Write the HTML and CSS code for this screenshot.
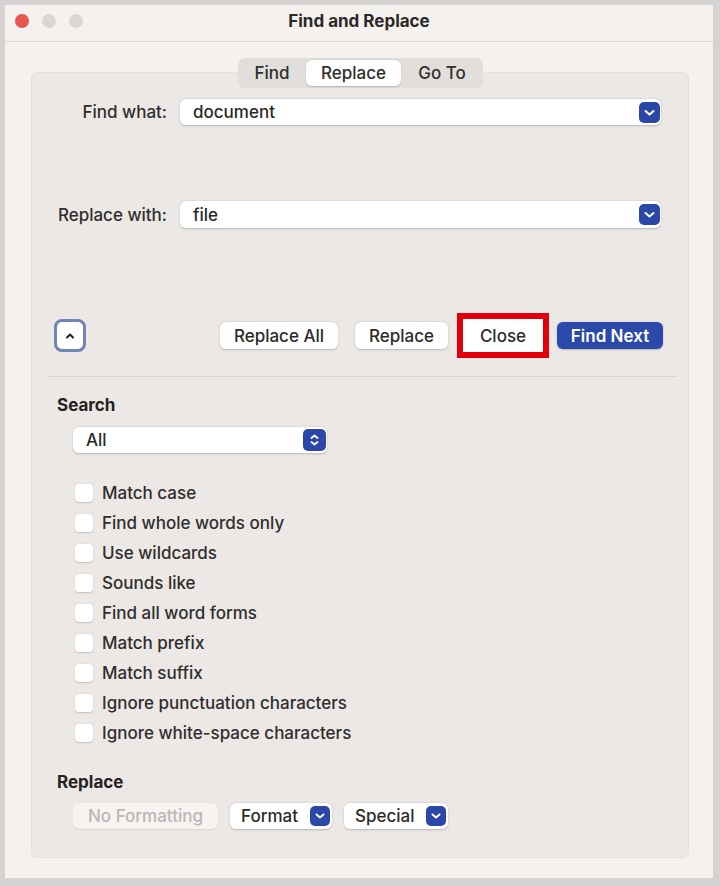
FILE: index.html
```html
<!DOCTYPE html>
<html>
<head>
<meta charset="utf-8">
<link rel="stylesheet" href="styles.css">
</head>
<body>
<div class="window">
  <div class="titlebar">
    <div class="lights">
      <span class="light red"></span>
      <span class="light gray"></span>
      <span class="light gray"></span>
    </div>
    <div class="title">Find and Replace</div>
  </div>
  <div class="content">
    <div class="tabs">
      <div class="tab">Find</div>
      <div class="tab selected">Replace</div>
      <div class="tab">Go To</div>
    </div>
    <div class="panel">
      <div class="field-row">
        <div class="label">Find what:</div>
        <div class="field">
          <span class="field-text">document</span>
          <span class="drop-btn"><svg width="21" height="21" viewBox="0 0 21 21"><path d="M6.5 9 L10.5 12.5 L14.5 9" fill="none" stroke="#fff" stroke-width="2" stroke-linecap="round" stroke-linejoin="round"/></svg></span>
        </div>
      </div>
      <div class="field-row second">
        <div class="label">Replace with:</div>
        <div class="field">
          <span class="field-text">file</span>
          <span class="drop-btn"><svg width="21" height="21" viewBox="0 0 21 21"><path d="M6.5 9 L10.5 12.5 L14.5 9" fill="none" stroke="#fff" stroke-width="2" stroke-linecap="round" stroke-linejoin="round"/></svg></span>
        </div>
      </div>
      <div class="button-row">
        <div class="collapse"><svg width="12" height="8" viewBox="0 0 12 8"><path d="M3 5.5 L6 2.5 L9 5.5" fill="none" stroke="#222" stroke-width="2" stroke-linecap="round" stroke-linejoin="round"/></svg></div>
        <div class="spacer"></div>
        <div class="btn w-replace-all">Replace All</div>
        <div class="btn w-replace">Replace</div>
        <div class="highlight"><div class="btn w-close">Close</div></div>
        <div class="btn primary w-find-next">Find Next</div>
      </div>
      <div class="separator"></div>
      <div class="section-title">Search</div>
      <div class="select">
        <span class="field-text">All</span>
        <span class="updown"><svg width="23" height="22" viewBox="0 0 23 22"><path d="M8.5 9 L11.5 6.5 L14.5 9 M8.5 13 L11.5 15.5 L14.5 13" fill="none" stroke="#fff" stroke-width="1.8" stroke-linecap="round" stroke-linejoin="round"/></svg></span>
      </div>
      <div class="checks">
        <div class="check"><span class="box"></span>Match case</div>
        <div class="check"><span class="box"></span>Find whole words only</div>
        <div class="check"><span class="box"></span>Use wildcards</div>
        <div class="check"><span class="box"></span>Sounds like</div>
        <div class="check"><span class="box"></span>Find all word forms</div>
        <div class="check"><span class="box"></span>Match prefix</div>
        <div class="check"><span class="box"></span>Match suffix</div>
        <div class="check"><span class="box"></span>Ignore punctuation characters</div>
        <div class="check"><span class="box"></span>Ignore white-space characters</div>
      </div>
      <div class="section-title replace-title">Replace</div>
      <div class="bottom-row">
        <div class="btn disabled w-nofmt">No Formatting</div>
        <div class="btn menu w-format">Format <span class="mini-drop"><svg width="20" height="20" viewBox="0 0 20 20"><path d="M6.5 8.5 L10 11.5 L13.5 8.5" fill="none" stroke="#fff" stroke-width="2" stroke-linecap="round" stroke-linejoin="round"/></svg></span></div>
        <div class="btn menu w-special">Special <span class="mini-drop"><svg width="20" height="20" viewBox="0 0 20 20"><path d="M6.5 8.5 L10 11.5 L13.5 8.5" fill="none" stroke="#fff" stroke-width="2" stroke-linecap="round" stroke-linejoin="round"/></svg></span></div>
      </div>
    </div>
  </div>
</div>
</body>
</html>
```

FILE: styles.css
```css
* { box-sizing: border-box; }
html, body { margin: 0; }
body {
  background: #d4d3d2;
  padding: 5px 7px 8px 5px;
  font-family: "Inter", "Liberation Sans", sans-serif;
  color: #2c2b2a;
  font-size: 17px;
  font-weight: 500;
}
.window {
  width: 708px;
  height: 873px;
  background: #f5f1ee;
  display: flex;
  flex-direction: column;
}
.titlebar {
  height: 37px;
  flex: none;
  border-bottom: 1px solid #dcd8d5;
  display: grid;
  grid-template-columns: 1fr auto 1fr;
  align-items: center;
}
.lights {
  display: flex;
  gap: 13px;
  padding-left: 10px;
  padding-bottom: 4px;
}
.light {
  width: 14px;
  height: 14px;
  border-radius: 50%;
  background: #d9d6d4;
}
.light.red { background: #e8564f; }
.title {
  font-weight: 700;
  font-size: 17px;
  color: #2a2928;
  padding-bottom: 4px;
}
.content {
  flex: 1;
  display: flex;
  flex-direction: column;
  padding: 16px 24px 21px 26px;
}
.tabs {
  align-self: center;
  display: flex;
  height: 30px;
  flex: none;
  background: #e2dedb;
  border-radius: 7px;
  position: relative;
  z-index: 1;
  margin-left: 1px;
}
.tab {
  display: flex;
  align-items: center;
  justify-content: center;
  font-size: 17px;
  color: #2f2e2d;
  padding: 0 10px;
}
.tab:first-child { width: 68px; }
.tab.selected {
  width: 95px;
  background: #fff;
  border-radius: 6px;
  margin: 2px 0;
  box-shadow: 0 0.5px 1.5px rgba(0,0,0,0.2);
}
.tab:last-child { width: 82px; }
.panel {
  flex: 1;
  margin-top: -16px;
  background: #ece8e5;
  border-radius: 6px;
  box-shadow: inset 0 0 0 1px rgba(0,0,0,0.03);
  padding: 27px 28px 29px 26px;
  display: flex;
  flex-direction: column;
}
.field-row {
  display: grid;
  grid-template-columns: 110px 481px;
  column-gap: 13px;
  align-items: center;
  height: 26px;
}
.field-row.second { margin-top: 76px; height: 27px; }
.label {
  text-align: right;
  color: #2f2e2d;
}
.field {
  height: 100%;
  background: #fff;
  border-radius: 6px;
  box-shadow: 0 0.5px 2px rgba(0,0,0,0.22);
  display: flex;
  align-items: center;
  justify-content: space-between;
  padding: 0 1px 0 13px;
}
.field-text { color: #2a2928; }
.drop-btn {
  width: 21px;
  height: 21px;
  border-radius: 5px;
  background: #2b47a8;
  display: flex;
  box-shadow: 0 0 0 1px rgba(255,255,255,0.8);
}
.button-row {
  margin-top: 91px;
  margin-right: -2px;
  display: flex;
  align-items: center;
  height: 33px;
}
.collapse {
  margin-left: -3px;
  width: 32px;
  height: 33px;
  border: 3px solid #7283b6;
  border-radius: 8px;
  background: #fff;
  display: flex;
  align-items: center;
  justify-content: center;
}
.spacer { flex: 1; }
.btn {
  height: 27px;
  background: #fff;
  border-radius: 6px;
  box-shadow: 0 0.5px 2px rgba(0,0,0,0.22);
  display: flex;
  align-items: center;
  justify-content: center;
  font-size: 17px;
  color: #2c2b2a;
  white-space: nowrap;
}
.w-replace-all { width: 118px; margin-right: 17px; }
.w-replace { width: 93px; margin-right: 9px; }
.highlight {
  width: 92px;
  height: 45px;
  border: 6px solid #e3000b;
  background: #fff;
  margin-right: 8px;
  display: flex;
  align-items: center;
  justify-content: center;
}
.w-close { width: 80px; height: 33px; box-shadow: none; }
.primary {
  width: 106px;
  background: #2a49a9;
  color: #fff;
  font-weight: 600;
}
.separator {
  margin: 24px -16px 0 -9px;
  height: 1px;
  background: #d9d5d2;
}
.section-title {
  margin-top: 18px;
  height: 20px;
  line-height: 20px;
  font-weight: 700;
  color: #242322;
}
.select {
  margin-top: 12px;
  margin-left: 16px;
  width: 254px;
  height: 26px;
  background: #fff;
  border-radius: 6px;
  box-shadow: 0 0.5px 2px rgba(0,0,0,0.22);
  display: flex;
  align-items: center;
  justify-content: space-between;
  padding: 0 1px 0 13px;
}
.updown {
  width: 23px;
  height: 22px;
  border-radius: 5px;
  background: #2b47a8;
  display: flex;
}
.checks {
  margin-top: 25px;
  display: flex;
  flex-direction: column;
}
.check {
  height: 30px;
  display: flex;
  align-items: center;
  padding-left: 18px;
  color: #2f2e2d;
}
.box {
  width: 18px;
  height: 18px;
  border-radius: 4px;
  background: #fff;
  box-shadow: 0 0.5px 1.5px rgba(0,0,0,0.18);
  margin-right: 9px;
}
.replace-title { margin-top: 24px; }
.bottom-row {
  margin-top: 11px;
  display: flex;
  gap: 12px;
  padding-left: 16px;
  height: 26px;
}
.bottom-row .btn { height: 26px; }
.disabled {
  width: 145px;
  color: #bab7b5;
  background: #f6f3f1;
  box-shadow: 0 0.5px 1px rgba(0,0,0,0.08);
}
.menu {
  justify-content: space-between;
  padding: 0 2px 0 11px;
}
.w-format { width: 102px; }
.w-special { width: 104px; }
.mini-drop {
  width: 20px;
  height: 20px;
  border-radius: 5px;
  background: #2b47a8;
  display: flex;
}
```
